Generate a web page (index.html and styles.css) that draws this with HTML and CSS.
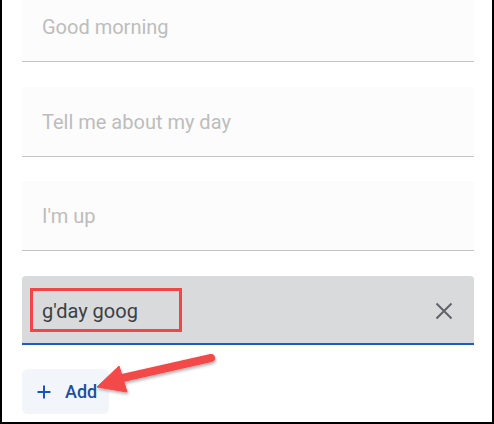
FILE: index.html
```html
<!DOCTYPE html>
<html>
<head>
<meta charset="utf-8">
<link rel="stylesheet" href="styles.css">
</head>
<body>
<div class="frame">
  <div class="fields">
    <div class="field"><span class="placeholder">Good morning</span></div>
    <div class="field"><span class="placeholder">Tell me about my day</span></div>
    <div class="field"><span class="placeholder">I'm up</span></div>
    <div class="field active">
      <span class="value">g'day goog</span>
      <svg class="close" width="20" height="20" viewBox="0 0 20 20"><path d="M2.5 2.5 L17.5 17.5 M17.5 2.5 L2.5 17.5" stroke="#5f6368" stroke-width="2" fill="none"/></svg>
      <div class="highlight"></div>
    </div>
  </div>
  <div class="add">
    <svg class="plus" width="14" height="14" viewBox="0 0 14 14"><path d="M7 0.5 V13.5 M0.5 7 H13.5" stroke="#1a56b4" stroke-width="2" fill="none"/></svg>
    <span>Add</span>
  </div>
  <svg class="arrow" width="494" height="424" viewBox="0 0 494 424">
    <defs>
      <filter id="sh" x="-20%" y="-50%" width="140%" height="200%">
        <feDropShadow dx="1" dy="2" stdDeviation="1.5" flood-color="#000" flood-opacity="0.3"/>
      </filter>
    </defs>
    <g filter="url(#sh)" fill="#f34848" stroke="#f34848">
      <path d="M211 358 L118 379" stroke-width="8" stroke-linecap="round" fill="none"/>
      <polygon points="97,387 119,366 127,392" stroke-width="1" stroke-linejoin="round"/>
    </g>
  </svg>
</div>
</body>
</html>
```
FILE: styles.css
```css
html, body {
  margin: 0;
  padding: 0;
  background: #fff;
}
.frame {
  position: relative;
  width: 494px;
  height: 424px;
  box-sizing: border-box;
  border-left: 2px solid #000;
  border-right: 2px solid #000;
  border-bottom: 2px solid #000;
  padding: 0 18px 0 20px;
  overflow: hidden;
  font-family: Roboto, "Liberation Sans", sans-serif;
}
.fields {
  display: flex;
  flex-direction: column;
  gap: 24.5px;
  margin-top: -8px;
}
.field {
  position: relative;
  height: 69px;
  box-sizing: content-box;
  background: #fcfcfc;
  border-bottom: 1px solid #c4c4c4;
  display: flex;
  align-items: flex-start;
  justify-content: space-between;
  padding: 0 20px;
  border-radius: 4px 4px 0 0;
}
.placeholder, .value {
  font-size: 20px;
  line-height: 24px;
  padding-top: 23px;
  color: #bdbdbd;
}
.field.active {
  height: 67px;
  background: #d9dadc;
  border-bottom: 2px solid #1a5cc0;
}
.value {
  color: #3c4043;
}
.close {
  margin-top: 25px;
}
.highlight {
  position: absolute;
  left: 8px;
  top: 12.5px;
  width: 152px;
  height: 44px;
  box-sizing: border-box;
  border: 3px solid #f24646;
}
.add {
  margin-top: 24.5px;
  width: 87px;
  height: 45px;
  box-sizing: border-box;
  background: #f2f6fb;
  border-radius: 6px;
  display: flex;
  align-items: center;
  padding-left: 14.5px;
  gap: 14.5px;
  font-size: 18px;
  font-weight: 500;
  color: #1b4fa6;
}
.arrow {
  position: absolute;
  left: -2px;
  top: 0;
}
```
